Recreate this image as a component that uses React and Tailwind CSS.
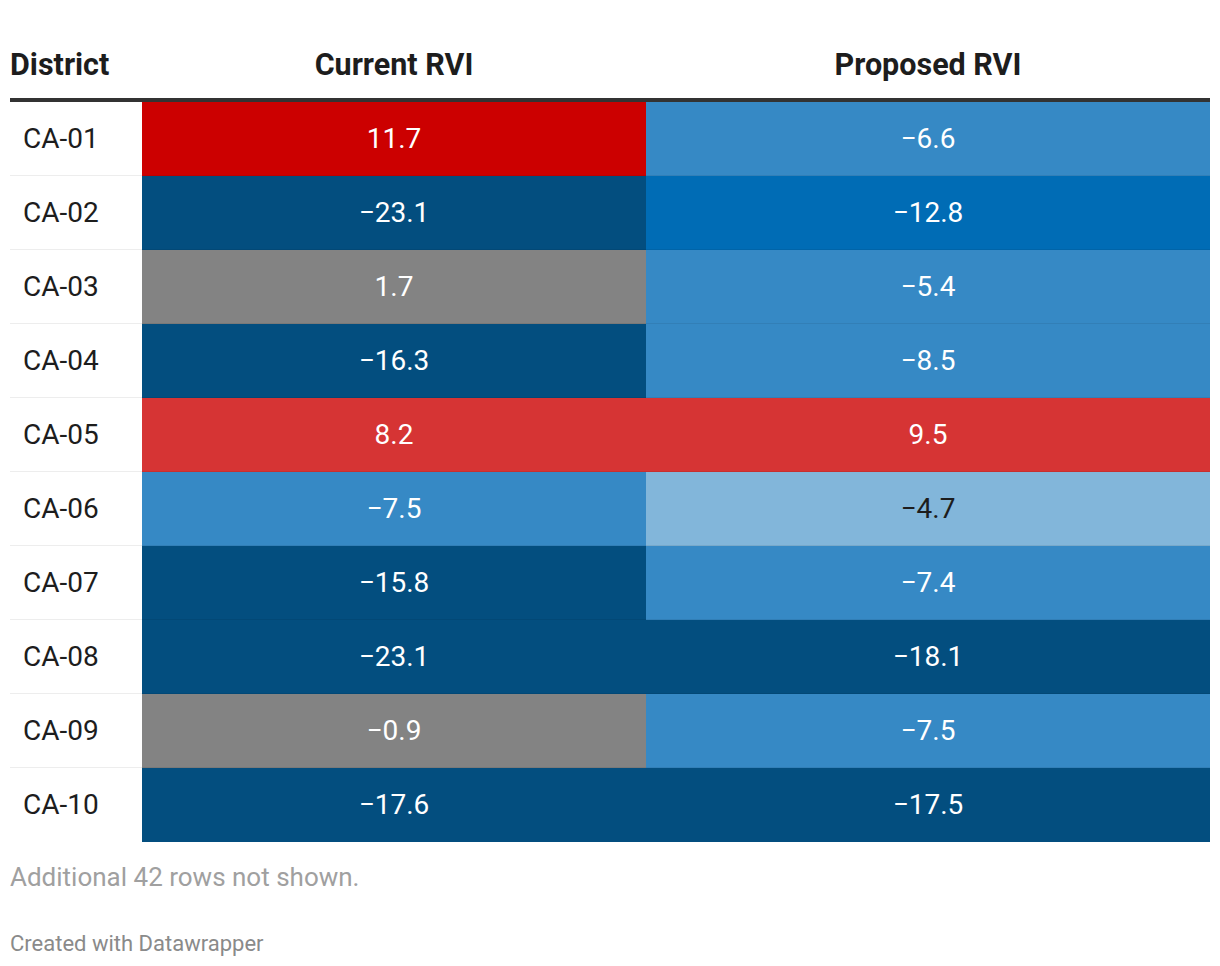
import React from "react";

const C = {
  red: "bg-[#cc0000] text-white",
  red2: "bg-[#d63434] text-white",
  navy: "bg-[#034e7f] text-white",
  gray: "bg-[#838383] text-white",
  mid: "bg-[#3689c5] text-white",
  blue: "bg-[#006cb5] text-white",
  light: "bg-[#82b6da] text-[#1d1d1d]",
};

const rows = [
  ["CA-01", "11.7", "red", "−6.6", "mid"],
  ["CA-02", "−23.1", "navy", "−12.8", "blue"],
  ["CA-03", "1.7", "gray", "−5.4", "mid"],
  ["CA-04", "−16.3", "navy", "−8.5", "mid"],
  ["CA-05", "8.2", "red2", "9.5", "red2"],
  ["CA-06", "−7.5", "mid", "−4.7", "light"],
  ["CA-07", "−15.8", "navy", "−7.4", "mid"],
  ["CA-08", "−23.1", "navy", "−18.1", "navy"],
  ["CA-09", "−0.9", "gray", "−7.5", "mid"],
  ["CA-10", "−17.6", "navy", "−17.5", "navy"],
];

export default function App() {
  return (
    <div className="w-[1220px] h-[966px] bg-white px-[10px] pt-[45px] font-['Roboto',sans-serif]">
      <div className="flex items-end h-[57px] border-b-4 border-[#333333] text-[30.5px] font-bold text-[#1d1d1d] pb-[18px] leading-none">
        <div className="w-[132px]">District</div>
        <div className="w-[504px] text-center">Current RVI</div>
        <div className="flex-1 text-center">Proposed RVI</div>
      </div>
      {rows.map(([d, a, ca, b, cb], i) => {
        const line = i < rows.length - 1 ? "border-b border-black/[0.07]" : "";
        return (
          <div key={d} className="flex h-[74px] text-[28px] leading-none">
            <div className={`w-[132px] pl-[13px] flex items-center text-[#1d1d1d] ${line}`}>{d}</div>
            <div className={`w-[504px] flex items-center justify-center ${line} ${C[ca]}`}>{a}</div>
            <div className={`flex-1 flex items-center justify-center ${line} ${C[cb]}`}>{b}</div>
          </div>
        );
      })}
      <div className="mt-[22px] text-[26px] text-[#a0a0a0] leading-none">Additional 42 rows not shown.</div>
      <div className="mt-[43px] text-[22px] text-[#8a8a8a] leading-none">Created with Datawrapper</div>
    </div>
  );
}
